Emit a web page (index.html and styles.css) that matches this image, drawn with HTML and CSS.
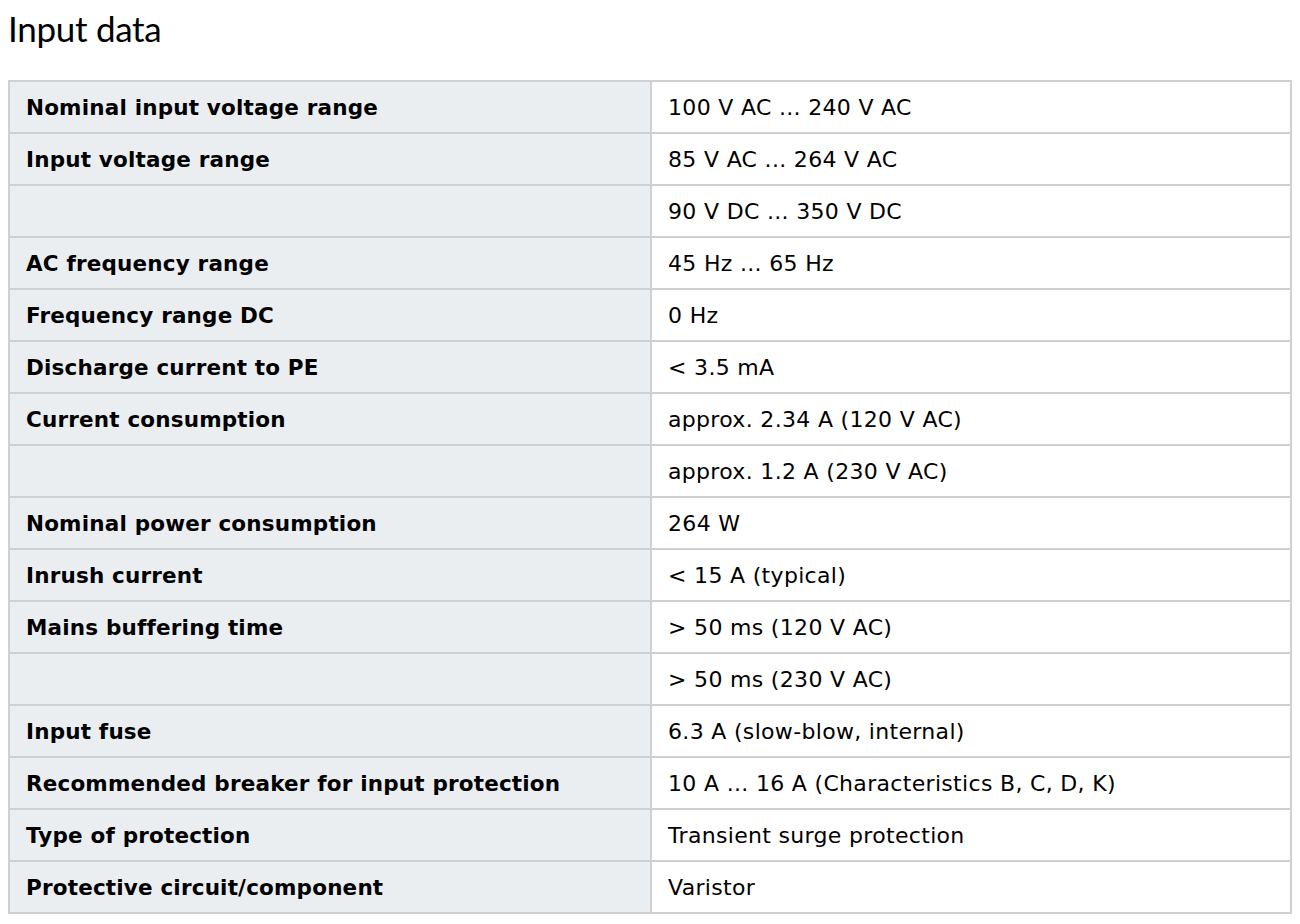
FILE: index.html
```html
<!DOCTYPE html>
<html>
<head>
<meta charset="utf-8">
<link rel="stylesheet" href="styles.css">
</head>
<body>
<h1 class="title">Input data</h1>
<table class="spec">
<tbody>
<tr><th>Nominal input voltage range</th><td>100 V AC ... 240 V AC</td></tr>
<tr><th>Input voltage range</th><td>85 V AC ... 264 V AC</td></tr>
<tr><th></th><td>90 V DC ... 350 V DC</td></tr>
<tr><th>AC frequency range</th><td>45 Hz ... 65 Hz</td></tr>
<tr><th>Frequency range DC</th><td>0 Hz</td></tr>
<tr><th>Discharge current to PE</th><td>&lt; 3.5 mA</td></tr>
<tr><th>Current consumption</th><td>approx. 2.34 A (120 V AC)</td></tr>
<tr><th></th><td>approx. 1.2 A (230 V AC)</td></tr>
<tr><th>Nominal power consumption</th><td>264 W</td></tr>
<tr><th>Inrush current</th><td>&lt; 15 A (typical)</td></tr>
<tr><th>Mains buffering time</th><td>&gt; 50 ms (120 V AC)</td></tr>
<tr><th></th><td>&gt; 50 ms (230 V AC)</td></tr>
<tr><th>Input fuse</th><td>6.3 A (slow-blow, internal)</td></tr>
<tr><th>Recommended breaker for input protection</th><td>10 A ... 16 A (Characteristics B, C, D, K)</td></tr>
<tr><th>Type of protection</th><td>Transient surge protection</td></tr>
<tr><th>Protective circuit/component</th><td>Varistor</td></tr>
</tbody>
</table>
</body>
</html>
```
FILE: styles.css
```css
body {
  margin: 0;
  padding: 0 8px;
  background: #fff;
  color: #000;
  font-family: "DejaVu Sans", Verdana, sans-serif;
}
.title {
  margin: 0;
  padding-top: 8px;
  height: 80px;
  box-sizing: border-box;
  font-family: Lato, "Open Sans", sans-serif;
  font-weight: 400;
  font-size: 35px;
  line-height: 40px;
  letter-spacing: -0.3px;
}
.spec {
  width: 1284px;
  border-collapse: collapse;
  table-layout: fixed;
  font-size: 21.5px;
}
.spec th,
.spec td {
  border: 2px solid #cdd1d4;
  height: 52px;
  padding: 1px 16px 0;
  text-align: left;
  vertical-align: middle;
  box-sizing: border-box;
}
.spec th {
  width: 642px;
  background: #eaeef1;
  font-weight: 700;
  letter-spacing: 0.18px;
}
.spec td {
  background: #fff;
  font-weight: 400;
  font-size: 22px;
  letter-spacing: 0.32px;
}
```
